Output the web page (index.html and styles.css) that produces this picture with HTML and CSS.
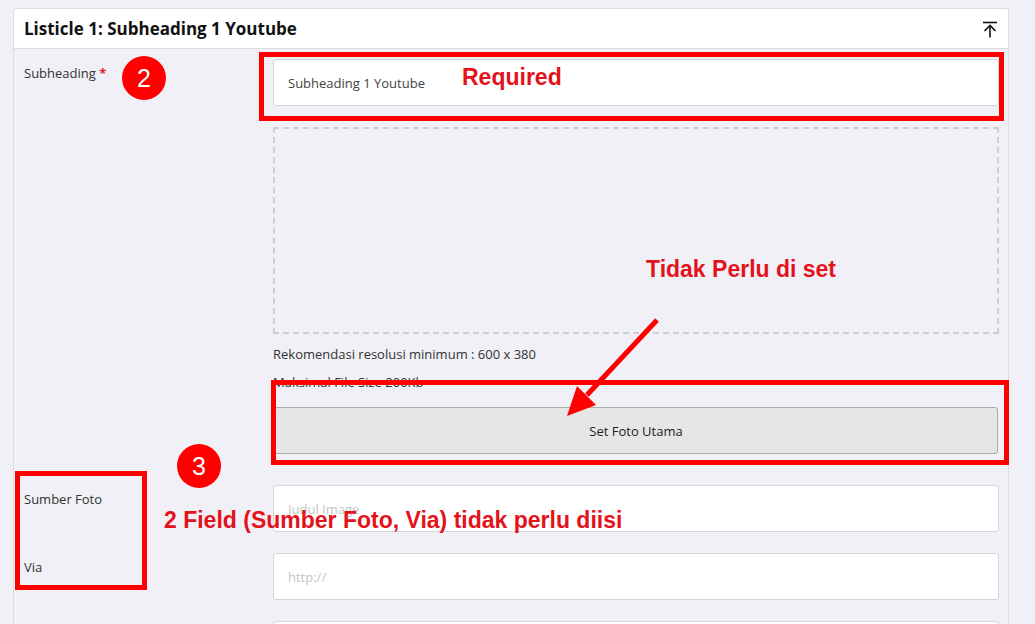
FILE: index.html
```html
<!DOCTYPE html>
<html lang="id">
<head>
    <meta charset="UTF-8">
    <meta name="viewport" content="width=device-width, initial-scale=1.0">
    <title>Listicle 1</title>
    <link rel="stylesheet" href="styles.css">
</head>
<body>
    <div class="card">
        <div class="card-header">
            <h3>Listicle 1: Subheading 1 Youtube</h3>
            <svg class="icon-top" width="16" height="18" viewBox="0 0 16 18" fill="none" stroke="#111" stroke-width="1.6">
                <path d="M1 2.5h14"/>
                <path d="M8 5.5v12"/>
                <path d="M2.5 11l5.5-5.5 5.5 5.5"/>
            </svg>
        </div>

        <div class="card-body">
            <!-- Subheading -->
            <div class="form-row">
                <label class="form-label">Subheading <span class="req">*</span></label>
                <div class="form-field">
                    <input type="text" class="form-input" value="Subheading 1 Youtube">
                </div>
            </div>

            <!-- Foto utama -->
            <div class="form-row photo-row">
                <div class="form-label"></div>
                <div class="form-field">
                    <div class="dropzone"></div>
                    <p class="hint">Rekomendasi resolusi minimum : 600 x 380</p>
                    <p class="hint">Maksimal File Size 200Kb</p>
                    <button type="button" class="btn-photo">Set Foto Utama</button>
                </div>
            </div>

            <div class="form-row">
                <label class="form-label">Sumber Foto</label>
                <div class="form-field">
                    <input type="text" class="form-input" placeholder="Judul Image">
                </div>
            </div>

            <div class="form-row">
                <label class="form-label">Via</label>
                <div class="form-field">
                    <input type="text" class="form-input" placeholder="http://">
                </div>
            </div>

            <div class="form-row">
                <label class="form-label"></label>
                <div class="form-field">
                    <input type="text" class="form-input">
                </div>
            </div>
        </div>

        <!-- annotations -->
        <div class="mark mark-required"></div>
        <div class="mark mark-photo"></div>
        <div class="mark mark-labels"></div>
        <div class="badge badge-2">2</div>
        <div class="badge badge-3">3</div>
        <div class="note note-required">Required</div>
        <div class="note note-photo">Tidak Perlu di set</div>
        <div class="note note-fields">2 Field (Sumber Foto, Via) tidak perlu diisi</div>
        <svg class="arrow" width="105" height="113" viewBox="0 0 105 113">
            <line x1="97" y1="5" x2="27" y2="80" stroke="#ff0000" stroke-width="5"/>
            <polygon points="7,101 36,90 17,71" fill="#ff0000"/>
        </svg>
    </div>
</body>
</html>
```

FILE: styles.css
```css
body {
    margin: 0;
    padding: 8px 26px 0 13px;
    background-color: #f1f0f6;
    font-family: "Open Sans", sans-serif;
    color: #333;
    overflow: hidden;
}
.card {
    position: relative;
    border: 1px solid #dcdce0;
    border-bottom: none;
    border-radius: 3px 3px 0 0;
}
.card-header {
    height: 39px;
    display: flex;
    align-items: center;
    justify-content: space-between;
    padding: 0 10px;
    background: white;
    border-bottom: 1px solid #dcdce0;
    border-radius: 3px 3px 0 0;
}
.card-header h3 {
    margin: 0;
    font-size: 17px;
    font-weight: 700;
    color: #111;
}
.icon-top {
    margin-top: 1px;
}
.card-body {
    display: flex;
    flex-direction: column;
    gap: 21px;
    padding: 10px 9px 0 10px;
}
.form-row {
    display: flex;
}
.photo-row {
    margin-bottom: 10px;
}
.form-label {
    width: 249px;
    flex-shrink: 0;
    padding-top: 5px;
    font-size: 13px;
    line-height: 18px;
    color: #333;
}
.req {
    color: #e0262d;
    font-weight: bold;
}
.form-field {
    flex: 1;
}
.form-input {
    display: block;
    width: 100%;
    height: 47px;
    box-sizing: border-box;
    padding: 0 14px;
    border: 1px solid #d4d4d8;
    border-radius: 3px;
    background: white;
    font-family: "Open Sans", sans-serif;
    font-size: 13px;
    color: #444;
}
.form-input::placeholder {
    color: #c4c4c4;
}
.dropzone {
    height: 207px;
    border: 2px dashed #cfcfd3;
    box-sizing: border-box;
}
.hint {
    margin: 11px 0 10px;
    font-size: 13px;
    line-height: 18px;
    color: #333;
}
.hint + .hint {
    margin-top: 0;
}
.btn-photo {
    display: block;
    width: calc(100% - 2px);
    margin: 16px 1px 0;
    height: 47px;
    background-color: #e6e6e6;
    border: 1px solid #ababab;
    border-radius: 3px;
    font-family: "Open Sans", sans-serif;
    font-size: 13px;
    color: #222;
}

/* annotation overlays */
.mark {
    position: absolute;
    border: 5px solid #ff0000;
    box-sizing: border-box;
}
.mark-required {
    left: 245px;
    top: 43px;
    width: 745px;
    height: 69px;
}
.mark-photo {
    left: 257px;
    top: 371px;
    width: 738px;
    height: 85px;
}
.mark-labels {
    left: 1px;
    top: 462px;
    width: 132px;
    height: 119px;
}
.badge {
    position: absolute;
    width: 44px;
    height: 44px;
    border-radius: 50%;
    background: #ff0000;
    color: white;
    font-family: "Liberation Sans", Arial, sans-serif;
    font-size: 25px;
    line-height: 44px;
    text-align: center;
}
.badge-2 {
    left: 108px;
    top: 47px;
}
.badge-3 {
    left: 163px;
    top: 435px;
}
.note {
    position: absolute;
    font-family: "Liberation Sans", Arial, sans-serif;
    font-weight: bold;
    font-size: 23px;
    line-height: 23px;
    color: #e3121b;
    white-space: nowrap;
}
.note-required {
    left: 448px;
    top: 57px;
}
.note-photo {
    left: 632px;
    top: 249px;
}
.note-fields {
    left: 150px;
    top: 500px;
}
.arrow {
    position: absolute;
    left: 546px;
    top: 306px;
}
```
